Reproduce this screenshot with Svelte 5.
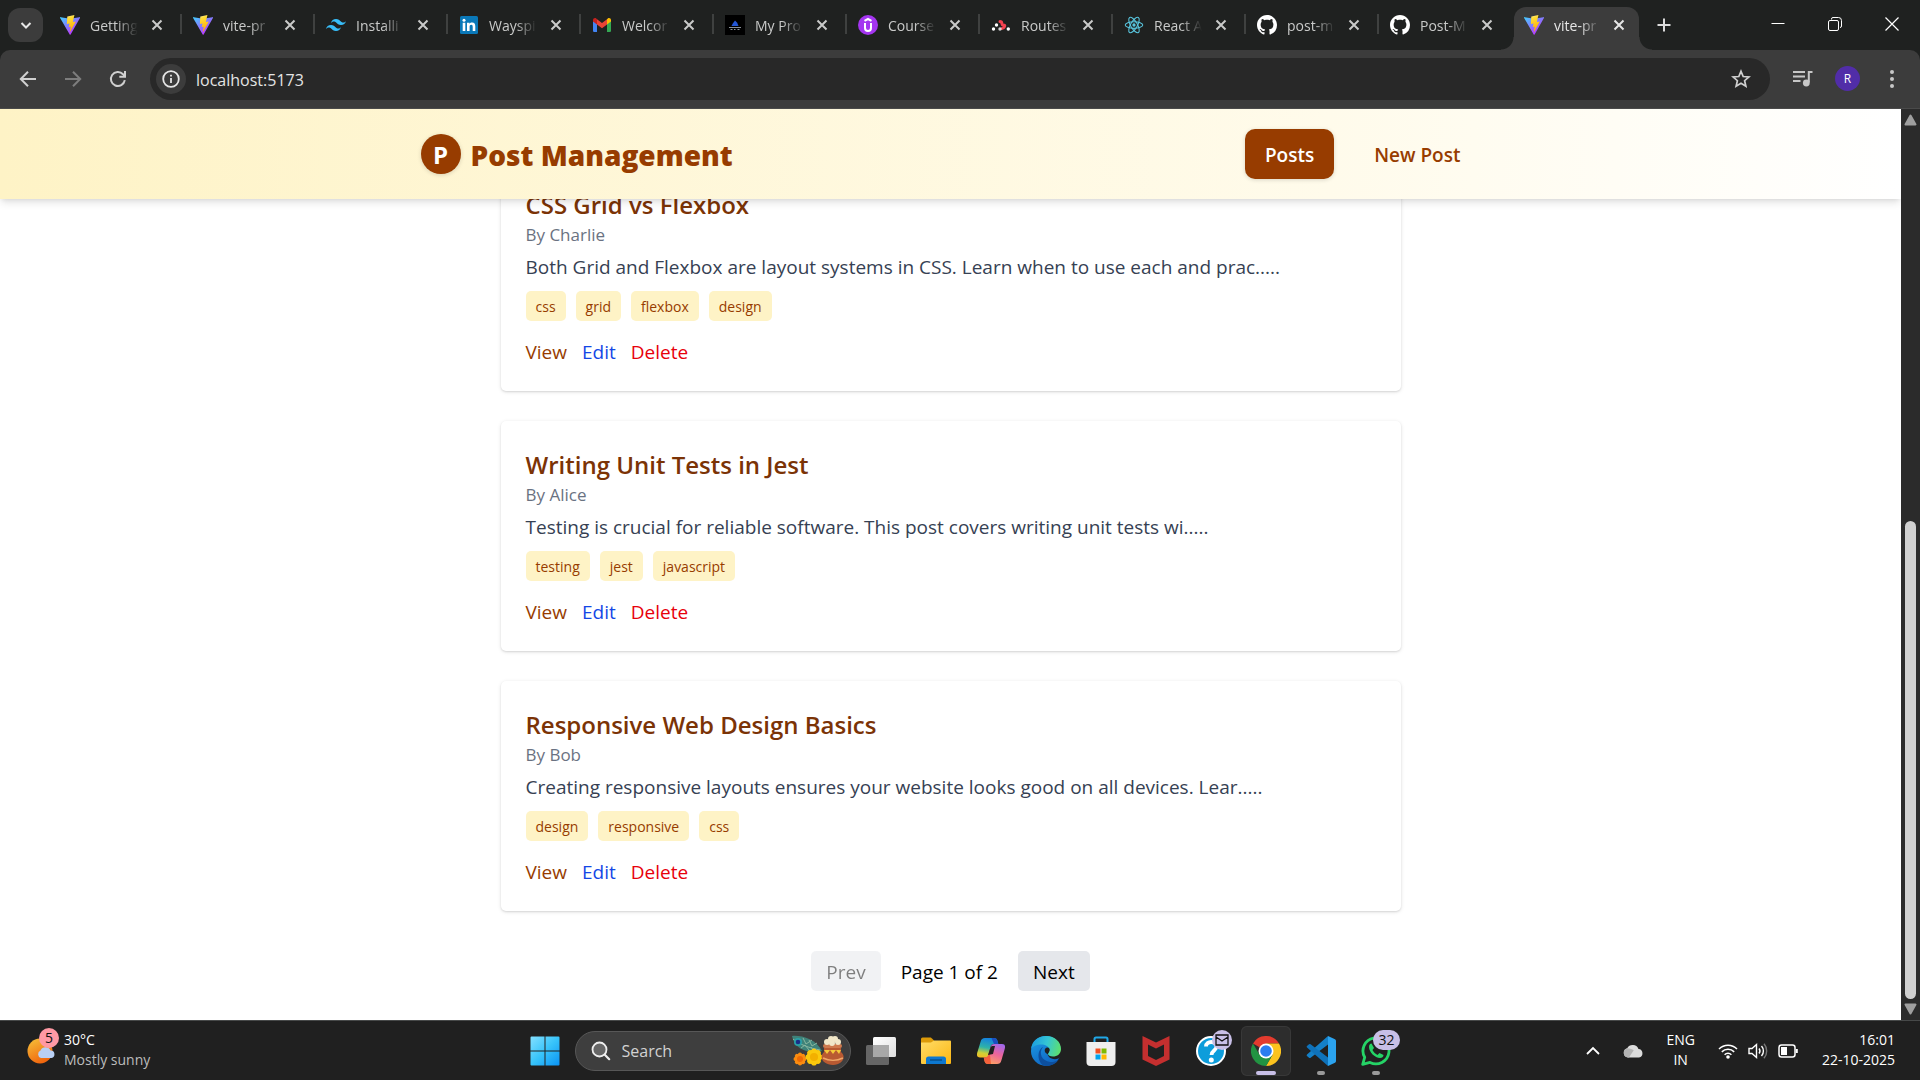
<script>
  const tabs = [
    { icon: 'vite', title: 'Getting' },
    { icon: 'vite', title: 'vite-pr' },
    { icon: 'tailwind', title: 'Installi' },
    { icon: 'linkedin', title: 'Wayspi' },
    { icon: 'gmail', title: 'Welcor' },
    { icon: 'project', title: 'My Pro' },
    { icon: 'udemy', title: 'Course' },
    { icon: 'router', title: 'Routes' },
    { icon: 'react', title: 'React A' },
    { icon: 'github', title: 'post-m' },
    { icon: 'github', title: 'Post-M' },
    { icon: 'vite', title: 'vite-pr', active: true }
  ];

  const posts = [
    {
      title: 'CSS Grid vs Flexbox',
      author: 'Charlie',
      excerpt: 'Both Grid and Flexbox are layout systems in CSS. Learn when to use each and prac.....',
      tags: ['css', 'grid', 'flexbox', 'design']
    },
    {
      title: 'Writing Unit Tests in Jest',
      author: 'Alice',
      excerpt: 'Testing is crucial for reliable software. This post covers writing unit tests wi.....',
      tags: ['testing', 'jest', 'javascript']
    },
    {
      title: 'Responsive Web Design Basics',
      author: 'Bob',
      excerpt: 'Creating responsive layouts ensures your website looks good on all devices. Lear.....',
      tags: ['design', 'responsive', 'css']
    }
  ];

  const petals = [0, 45, 90, 135, 180, 225, 270, 315];
</script>

{#snippet closeIcon()}
  <svg class="close-icon" viewBox="0 0 12 12" aria-hidden="true"><path d="M1.5 1.5l9 9M10.500 1.500l-9 9" /></svg>
{/snippet}

{#snippet favicon(name)}
  {#if name === 'vite'}
    <svg class="favicon" viewBox="0 0 32 32" aria-hidden="true">
      <defs>
        <linearGradient id="vite-a" x1="0" y1="0" x2="0.7" y2="0.9"><stop offset="0" stop-color="#41d1ff" /><stop offset="1" stop-color="#bd34fe" /></linearGradient>
        <linearGradient id="vite-b" x1="0.4" y1="0" x2="0.6" y2="1"><stop offset="0" stop-color="#ffea83" /><stop offset="0.15" stop-color="#ffdd35" /><stop offset="1" stop-color="#ffa800" /></linearGradient>
      </defs>
      <path fill="url(#vite-a)" d="M31.900 4.700 17 31.300a.85.85 0 0 1-1.500 0L.2 4.700a.85.85 0 0 1 .9-1.300l15 2.700 14.900-2.700a.85.85 0 0 1 .9 1.300z" />
      <path fill="url(#vite-b)" d="M23 .1 12 2.200a.4.400 0 0 0-.33.380L11 14a.42.420 0 0 0 .5.430l3.100-.7a.42.420 0 0 1 .5.500l-.9 4.500a.42.420 0 0 0 .53.480l1.900-.57a.42.420 0 0 1 .53.490l-1.450 7c-.1.440.490.680.73.310L24.900 11a.42.420 0 0 0-.45-.6l-3.200.62a.42.420 0 0 1-.48-.53L22.900 .6A.42.420 0 0 0 23 .1z" />
    </svg>
  {:else if name === 'tailwind'}
    <svg class="favicon" viewBox="0 0 24 24" aria-hidden="true">
      <path fill="#38bdf8" d="M12 4.800c-3.200 0-5.200 1.600-6 4.800 1.200-1.600 2.600-2.200 4.200-1.800.91.230 1.570.890 2.290 1.620C13.670 10.600 15.030 12 18 12c3.200 0 5.200-1.600 6-4.800-1.200 1.600-2.600 2.200-4.200 1.800-.91-.23-1.570-.89-2.290-1.620C16.330 6.200 14.970 4.800 12 4.800zM6 12c-3.200 0-5.200 1.600-6 4.800 1.200-1.600 2.600-2.200 4.200-1.800.91.230 1.570.890 2.290 1.620 1.180 1.180 2.540 2.580 5.510 2.580 3.200 0 5.200-1.600 6-4.800-1.200 1.600-2.600 2.200-4.200 1.800-.91-.23-1.570-.89-2.290-1.620C10.330 13.400 8.970 12 6 12z" />
    </svg>
  {:else if name === 'linkedin'}
    <svg class="favicon" viewBox="0 0 20 20" aria-hidden="true">
      <rect x="1" y="1" width="18" height="18" rx="1.500" fill="#0a78b8" />
      <circle cx="5" cy="5.200" r="1.500" fill="#fff" />
      <path fill="#fff" d="M3.700 7.800h2.600V16H3.700zM8 7.800h2.500v1.100c.5-.8 1.400-1.300 2.600-1.300 2.400 0 3.200 1.500 3.200 3.900V16h-2.600v-4.100c0-1.300-.3-2.100-1.400-2.100-1.200 0-1.700.8-1.700 2.100V16H8z" />
    </svg>
  {:else if name === 'gmail'}
    <svg class="favicon" viewBox="0 0 20 20" aria-hidden="true">
      <path fill="#4285f4" d="M1 5.500v10.200c0 .7.600 1.300 1.300 1.300H5V9z" />
      <path fill="#34a853" d="M15 17h2.700c.7 0 1.300-.6 1.300-1.300V5.500L15 9z" />
      <path fill="#fbbc04" d="M15 4.200V9.500l4-3V5c0-1.700-1.900-2.600-3.200-1.600z" />
      <path fill="#ea4335" d="M5 9.500V4.200L10 8l5-3.800v5.300L10 13.300z" />
      <path fill="#c5221f" d="M1 5v1.500l4 3V4.200l-.8-.8C2.900 2.400 1 3.300 1 5z" />
    </svg>
  {:else if name === 'project'}
    <svg class="favicon" viewBox="0 0 20 20" aria-hidden="true">
      <rect width="20" height="20" fill="#000" />
      <path fill="#2457d6" d="M10 5.500l2.200 2.300 1.300 3.200H6.500l1.300-2.600z" />
      <path stroke="#8d949c" stroke-width="1.200" d="M4 12.500h12M5.500 14.500h2M9 14.500h1.500M12.500 14.500h2" />
    </svg>
  {:else if name === 'udemy'}
    <svg class="favicon" viewBox="0 0 20 20" aria-hidden="true">
      <circle cx="10" cy="10" r="10" fill="#a435f0" />
      <path fill="none" stroke="#fff" stroke-width="2" d="M6.500 5.900 10 4l3.500 1.900M7 8v5a3 3 0 0 0 6 0V8" />
    </svg>
  {:else if name === 'router'}
    <svg class="favicon" viewBox="0 0 20 20" aria-hidden="true">
      <path fill="none" stroke="#f44250" stroke-width="3" stroke-linecap="round" stroke-linejoin="round" d="M9 6.500c3 0 1 3.500 3 3.500s2 .5 1.500 1.500-1.500 2-2.500 2" />
      <circle cx="5.500" cy="10" r="1.700" fill="#fff" /><circle cx="2.500" cy="14" r="1.700" fill="#fff" />
      <circle cx="9" cy="14" r="1.700" fill="#fff" opacity=".8" /><circle cx="17.300" cy="14" r="1.700" fill="#fff" />
    </svg>
  {:else if name === 'react'}
    <svg class="favicon" viewBox="-12 -12 24 24" aria-hidden="true">
      <g fill="none" stroke="#58c4dc" stroke-width="1.300"><ellipse rx="10.500" ry="4" /><ellipse rx="10.500" ry="4" transform="rotate(60)" /><ellipse rx="10.500" ry="4" transform="rotate(120)" /></g>
      <circle r="2" fill="#58c4dc" />
    </svg>
  {:else}
    <svg class="favicon" viewBox="0 0 16 16" aria-hidden="true">
      <path fill="#fff" d="M8 0C3.580 0 0 3.580 0 8c0 3.540 2.290 6.530 5.470 7.590.4.070.55-.17.55-.38 0-.19-.01-.82-.01-1.490-2.010.370-2.530-.49-2.690-.94-.09-.23-.48-.94-.82-1.130-.28-.15-.68-.52-.01-.53.630-.01 1.080.580 1.230.820.720 1.210 1.870.870 2.330.660.070-.52.280-.87.510-1.070-1.780-.2-3.640-.89-3.640-3.950 0-.87.310-1.590.82-2.150-.08-.2-.36-1.020.08-2.120 0 0 .67-.21 2.200.82.640-.18 1.320-.27 2-.27s1.360.090 2 .27c1.530-1.040 2.200-.82 2.200-.82.440 1.100.160 1.920.08 2.120.510.560.82 1.270.82 2.150 0 3.070-1.870 3.750-3.650 3.950.290.250.540.730.540 1.480 0 1.070-.01 1.930-.01 2.200 0 .21.150.460.550.380A8.010 8.010 0 0 0 16 8c0-4.420-3.580-8-8-8z" />
    </svg>
  {/if}
{/snippet}

<div class="desktop">
  <div class="tab-strip">
    <button class="tab-search" aria-label="Search tabs">
      <svg width="14" height="14" viewBox="0 0 14 14"><path d="M2.500 5L7 9.500 11.500 5" fill="none" stroke="#e8e8e8" stroke-width="2" /></svg>
    </button>
    <div class="tabs">
      {#each tabs as tab}
        <div class="tab" class:active={tab.active}>
          {@render favicon(tab.icon)}
          <span class="tab-title">{tab.title}</span>
          <button class="tab-close" aria-label="Close tab">{@render closeIcon()}</button>
        </div>
      {/each}
    </div>
    <button class="new-tab" aria-label="New tab">
      <svg width="14" height="14" viewBox="0 0 14 14"><path d="M7 0.500v13M.5 7h13" stroke="#dcdcdc" stroke-width="2" /></svg>
    </button>
    <div class="window-controls">
      <button aria-label="Minimize"><svg width="14" height="14" viewBox="0 0 14 14"><path d="M.5 6.500h13" stroke="#fff" /></svg></button>
      <button aria-label="Restore"><svg width="14" height="14" viewBox="0 0 14 14"><path d="M3.500 2.500V2a1.500 1.500 0 0 1 1.500-1.500h5.500a3 3 0 0 1 3 3V9a1.500 1.500 0 0 1-1.500 1.500M2 3.500h7a1.500 1.500 0 0 1 1.500 1.500v7a1.500 1.500 0 0 1-1.500 1.500H2A1.500 1.500 0 0 1 .5 12V5A1.500 1.500 0 0 1 2 3.500z" fill="none" stroke="#fff" /></svg></button>
      <button aria-label="Close window"><svg width="14" height="14" viewBox="0 0 14 14"><path d="M.5 .5l13 13M13.500 .5l-13 13" stroke="#fff" stroke-width="1.200" /></svg></button>
    </div>
  </div>

  <div class="toolbar">
    <button class="tool" aria-label="Back"><svg width="20" height="20" viewBox="0 0 20 20"><path d="M18 10H3M10 2.800 2.800 10l7.200 7.200" fill="none" stroke="#d0d0d0" stroke-width="2" /></svg></button>
    <button class="tool" aria-label="Forward"><svg width="20" height="20" viewBox="0 0 20 20"><path d="M2 10h15M10 2.800 17.200 10 10 17.200" fill="none" stroke="#7d7d7d" stroke-width="2" /></svg></button>
    <button class="tool" aria-label="Reload"><svg width="20" height="20" viewBox="0 0 20 20"><path d="M16.800 11.200A7 7 0 1 1 15 5.200L16.600 7M17 2v5.700h-5.700" fill="none" stroke="#d0d0d0" stroke-width="2" /></svg></button>
    <div class="omnibox">
      <button class="site-info" aria-label="Site information">
        <svg width="18" height="18" viewBox="0 0 18 18"><circle cx="9" cy="9" r="7.800" fill="none" stroke="#e6e6e6" stroke-width="1.800" /><path d="M9 8v5M9 4.800v1.800" stroke="#e6e6e6" stroke-width="1.800" /></svg>
      </button>
      <input class="url" type="text" value="localhost:5173" aria-label="Address bar" />
      <button class="bookmark" aria-label="Bookmark this tab">
        <svg width="20" height="20" viewBox="0 0 20 20"><path d="M10 2.300l2.200 5.200 5.700.5-4.300 3.700 1.300 5.500L10 14.300l-4.900 2.900 1.300-5.500L2.100 8l5.700-.5z" fill="none" stroke="#d0d0d0" stroke-width="1.700" /></svg>
      </button>
    </div>
    <button class="tool media" aria-label="Media controls">
      <svg width="20" height="18" viewBox="0 0 20 18"><path d="M0 2h12M0 6.500h12M0 11h7.500" stroke="#c7c7c7" stroke-width="2" /><path d="M15 2h4.500M15.800 1v11.500" stroke="#c7c7c7" stroke-width="2" /><circle cx="13.300" cy="13" r="3.400" fill="#c7c7c7" /></svg>
    </button>
    <button class="avatar" aria-label="Profile R">R</button>
    <button class="tool menu" aria-label="Chrome menu"><svg width="6" height="20" viewBox="0 0 6 20"><g fill="#c7c7c7"><circle cx="3" cy="3" r="2" /><circle cx="3" cy="10" r="2" /><circle cx="3" cy="17" r="2" /></g></svg></button>
  </div>

  <div class="viewport">
    <div class="page">
      <header>
        <div class="header-inner">
          <a class="brand" href="/"><span class="brand-mark">P</span><span class="brand-name">Post Management</span></a>
          <nav>
            <a class="nav-link current" href="/">Posts</a>
            <a class="nav-link" href="/new">New Post</a>
          </nav>
        </div>
      </header>
      <main>
        <div class="posts">
          {#each posts as post}
            <article>
              <h2>{post.title}</h2>
              <p class="author">By {post.author}</p>
              <p class="excerpt">{post.excerpt}</p>
              <div class="tags">
                {#each post.tags as tag}<span class="tag">{tag}</span>{/each}
              </div>
              <div class="actions">
                <a class="view" href="/posts">View</a>
                <a class="edit" href="/edit">Edit</a>
                <button class="delete">Delete</button>
              </div>
            </article>
          {/each}
        </div>
        <div class="pagination">
          <button disabled>Prev</button>
          <span>Page 1 of 2</span>
          <button>Next</button>
        </div>
      </main>
    </div>
    <div class="scrollbar">
      <svg width="13" height="12" viewBox="0 0 13 12"><path d="M6.500 1.500l5 9h-10z" fill="#9f9f9f" stroke="#9f9f9f" stroke-linejoin="round" stroke-width="2" /></svg>
      <div class="track"><div class="thumb"></div></div>
      <svg width="13" height="12" viewBox="0 0 13 12"><path d="M6.500 10.500l5-9h-10z" fill="#9f9f9f" stroke="#9f9f9f" stroke-linejoin="round" stroke-width="2" /></svg>
    </div>
  </div>

  <footer class="taskbar">
    <button class="weather">
      <span class="weather-icon">
        <svg width="30" height="30" viewBox="0 0 30 30" aria-hidden="true">
          <defs><linearGradient id="sun" x1="0" y1="0" x2="0.5" y2="1"><stop offset="0" stop-color="#f6c33a" /><stop offset="1" stop-color="#f0660e" /></linearGradient></defs>
          <circle cx="13" cy="15" r="12.500" fill="url(#sun)" />
          <path d="M14 22a4 4 0 0 1-.5-7.500A5.500 5.500 0 0 1 23.500 14.500 3.800 3.800 0 0 1 24.500 22z" fill="#b9d0f5" />
        </svg>
        <span class="badge pink">5</span>
      </span>
      <span class="two-line"><span>30°C</span><span class="dim">Mostly sunny</span></span>
    </button>

    <div class="apps">
      <button class="app" aria-label="Start">
        <svg width="30" height="30" viewBox="0 0 30 30"><defs><linearGradient id="win" x1="0" y1="0" x2="1" y2="1"><stop offset="0" stop-color="#84e0ff" /><stop offset="0.5" stop-color="#38c4fa" /><stop offset="1" stop-color="#0a93f5" /></linearGradient></defs><path fill="url(#win)" d="M1.500.5H14.500V14.500H.5V1.500a1 1 0 0 1 1-1zM15.500.5h13a1 1 0 0 1 1 1v13h-14zM.5 15.500h14v14h-13a1 1 0 0 1-1-1zM15.500 15.500h14v13a1 1 0 0 1-1 1h-13z" /></svg>
      </button>
      <label class="search">
        <svg width="20" height="20" viewBox="0 0 20 20" aria-hidden="true"><circle cx="8.500" cy="8.500" r="7" fill="#666" stroke="#eee" stroke-width="1.800" /><path d="M13.800 13.800l4.400 4.400" stroke="#eee" stroke-width="2.200" stroke-linecap="round" /></svg>
        <input type="text" placeholder="Search" aria-label="Search" />
        <svg class="festive" width="53" height="31" viewBox="0 0 53 31" aria-hidden="true">
          <path d="M1 1c9-1 24 3 30 15C18 19 4 15 1 1z" fill="#3f8279" />
          <path d="M2 4c7 6 17 9 27 11M12 3l3 6 6-4M18 5l3 6 5-3M10 13l4-3 4 5M20 12l2 3" fill="none" stroke="#88b7a0" />
          <circle cx="7" cy="7" r="4" fill="#2aa0a6" /><circle cx="7" cy="7" r="2.300" fill="#192f88" />
          <g fill="#fb8c10"><circle cx="9" cy="24" r="5.500" />{#each petals as a}<circle cx="9" cy="19.500" r="2" transform="rotate({a} 9 24)" />{/each}</g><circle cx="9" cy="24" r="3" fill="#ee6a05" />
          <g fill="#fbc90d"><circle cx="23" cy="22" r="7.500" />{#each petals as a}<circle cx="23" cy="16" r="2.600" transform="rotate({a} 23 22)" />{/each}</g><circle cx="23" cy="22" r="4" fill="#f3b000" />
          <path d="M33 13h17v4c6 5 1 13-8 13s-15-7-9-13z" fill="#b95a32" />
          <rect x="32" y="9" width="19" height="4" rx="2" fill="#cf7a4e" />
          <path d="M33 15l3 4 3-4 3 4 3-4 3 4 2-4z" fill="#f5c83a" /><path d="M32 23c6 3 14 3 20 0" fill="none" stroke="#f0a768" stroke-width="1.500" />
          <g fill="#f2e7c9"><circle cx="36" cy="7" r="3" /><circle cx="40" cy="4" r="3" /><circle cx="44" cy="4" r="3" /><circle cx="47" cy="7" r="3" /><circle cx="41" cy="8" r="3" /></g>
        </svg>
      </label>
      <button class="app" aria-label="Task view">
        <svg width="30" height="28" viewBox="0 0 30 28"><defs><linearGradient id="tv" x1="0" y1="0" x2="1" y2="1"><stop offset="0" stop-color="#fff" /><stop offset="1" stop-color="#dedede" /></linearGradient></defs><rect y="8" width="23" height="20" rx="1.500" fill="#666" /><rect x="7" width="23" height="20" rx="1.500" fill="url(#tv)" /><path d="M7 8h16v12H8a1 1 0 0 1-1-1z" fill="#a8a8a8" /></svg>
      </button>
      <button class="app" aria-label="File Explorer">
        <svg width="30" height="27" viewBox="0 0 30 27"><defs><linearGradient id="fold" x1="0" y1="0" x2="1" y2="1"><stop offset="0" stop-color="#ffdc68" /><stop offset="1" stop-color="#fbb713" /></linearGradient></defs><path d="M0 6V2a1.500 1.500 0 0 1 1.500-1.500H9c1 0 1.500.5 2 1L13 3.500V8H0z" fill="#dc9a09" /><path d="M0 5.500h10l3-2h16a1 1 0 0 1 1 1V26a1 1 0 0 1-1 1H1a1 1 0 0 1-1-1z" fill="url(#fold)" /><path d="M5 27v-5a2.500 2.500 0 0 1 2.500-2.500h15A2.500 2.500 0 0 1 25 22v5z" fill="#0d78d0" /><path d="M9 23h12" stroke="#07508e" stroke-width="1.500" /></svg>
      </button>
      <button class="app" aria-label="Copilot">
        <svg width="28" height="26" viewBox="0 0 28 26"><defs>
          <linearGradient id="cpa" x1="0.3" y1="0" x2="0.1" y2="1"><stop offset="0" stop-color="#1684dc" /><stop offset="0.45" stop-color="#2fb3a8" /><stop offset="0.75" stop-color="#d0d136" /><stop offset="1" stop-color="#f7b822" /></linearGradient>
          <linearGradient id="cpb" x1="0.8" y1="0" x2="0.4" y2="1"><stop offset="0" stop-color="#9f68ee" /><stop offset="0.5" stop-color="#ec649b" /><stop offset="1" stop-color="#fb9f67" /></linearGradient></defs>
          <path d="M8 0h9c2 0 3 1 3.500 3l.8 3H17c-2 0-3 1-3.500 3l-2.900 10.500H3c-3 0-3.500-2-2.700-5L3.500 4C4.300 1 5.500 0 8 0z" fill="url(#cpa)" />
          <path d="M14.500 0H17c2 0 3 1 3.500 3l.8 3H17z" fill="#1a4fc0" />
          <path d="M20 26h-9c-2 0-3-1-3.500-3l-.8-3.500H8c2 0 3-1 3.500-3l2-7c.7-2.500 1.500-3.500 4-3.500H25c3 0 3.500 2 2.700 5L24.500 22c-.8 3-2 4-4.500 4z" fill="url(#cpb)" />
          <path d="M6.700 19.500H8c2 0 3-1 3.500-3l1-3.500 1.500 13h-3c-2 0-3-1-3.500-3z" fill="#f4522f" opacity=".8" />
          <path d="M13 11l-2 6 5-1 2-8h-2.500c-1.300 0-2 1-2.500 3z" fill="#202020" /></svg>
      </button>
      <button class="app" aria-label="Edge">
        <svg width="30" height="30" viewBox="0 0 30 30"><defs>
          <linearGradient id="eda" x1="0" y1="0.4" x2="1" y2="0.6"><stop offset="0" stop-color="#1b9de0" /><stop offset="0.5" stop-color="#35c6d4" /><stop offset="1" stop-color="#5ee06c" /></linearGradient>
          <linearGradient id="edb" x1="0" y1="0" x2="0.5" y2="1"><stop offset="0" stop-color="#1ea1e6" /><stop offset="1" stop-color="#0f66c4" /></linearGradient></defs>
          <circle cx="15" cy="15" r="15" fill="url(#edb)" />
          <path d="M12 11c-5 6-1 14 7 15 3 .3 6-.7 8.500-2-3 4-7.500 6-12.500 6C7 29.500 4.500 15 12 11z" fill="#0d4f9e" />
          <path d="M20 9l10 5v5.500l-1.500 2.500c-4 2.500-12 1-12-5z" fill="#202020" />
          <path d="M0 13C1 5 7 0 15 0c9 0 15 6 15 13 0 5-4 7.500-8 7.500-3 0-5-1-5-2.500s1.500-2 1.500-4c0-3-3.500-5.500-8-5.500C5.500 8.500 1.500 10.500 0 13z" fill="url(#eda)" />
          <path d="M14 13c2-2.500 5-1.500 4.500 1 0 2-1.500 2.500-1.500 4-2 0-4-2.500-3-5z" fill="#202020" />
        </svg>
      </button>
      <button class="app" aria-label="Microsoft Store">
        <svg width="30" height="30" viewBox="0 0 30 30"><path d="M8.500 8V3a1.500 1.500 0 0 1 1.500-1.500h10A1.500 1.500 0 0 1 21.500 3v5" fill="none" stroke="#20a8e8" stroke-width="2" /><path d="M.5 6h29v20a4 4 0 0 1-4 4h-21a4 4 0 0 1-4-4z" fill="#efefef" /><path fill="#f25022" d="M9.500 12.500h5v5h-5z" /><path fill="#7fba00" d="M15.500 12.500h5v5h-5z" /><path fill="#00a4ef" d="M9.500 18.500h5v5h-5z" /><path fill="#ffb900" d="M15.500 18.500h5v5h-5z" /></svg>
      </button>
      <button class="app" aria-label="McAfee">
        <svg width="28" height="30" viewBox="0 0 28 30"><path fill="#c52f2f" fill-rule="evenodd" d="M.5 0 14 6.500 27.500 0v23.500L14 30 .5 23.500zM6 8.500V20l8 4 8-4V8.500l-8 4z" /></svg>
      </button>
      <button class="app" aria-label="Help">
        <svg width="30" height="30" viewBox="0 0 30 30"><circle cx="15" cy="15" r="14" fill="#0d9ddb" stroke="#fff" stroke-width="2" /><path d="M10 10.500C10 4.500 20.500 4.500 20.500 10.500c0 4-5 4-5 8.500" fill="none" stroke="#fff" stroke-width="3.800" /><circle cx="15.300" cy="24" r="2.500" fill="#fff" /></svg>
        <span class="badge lilac mail"><svg width="14" height="12" viewBox="0 0 14 12"><path d="M1 1h12v10H1zM1 3l6 4 6-4" fill="none" stroke="#111" stroke-width="1.300" /></svg></span>
      </button>
      <button class="app selected" aria-label="Chrome">
        <svg width="30" height="30" viewBox="0 0 30 30"><path d="M15 15 2 7.500A15 15 0 0 1 28 7.500H15z" fill="#e33b2e" /><path d="M15 7.500h13A15 15 0 0 1 15 30l6.500-11.200z" fill="#fcc31e" /><path d="M2 7.500A15 15 0 0 0 15 30l6.500-11.200H8.500z" fill="#229342" /><circle cx="15" cy="15" r="7.500" fill="#fff" /><circle cx="15" cy="15" r="5.800" fill="#2b7df0" /></svg>
        <span class="running on"></span>
      </button>
      <button class="app" aria-label="Visual Studio Code">
        <svg width="30" height="30" viewBox="0 0 30 30"><path d="M22 0 1 18.500a1 1 0 0 0 0 1.500l2 1.700a1.300 1.300 0 0 0 1.600 0L22 8.500z" fill="#1480c8" /><path d="M22 30 1 11.500A1 1 0 0 1 1 10l2-1.700a1.300 1.300 0 0 1 1.600 0L22 21.500z" fill="#0f72ba" /><path d="M22 0l7 3.300a1.800 1.800 0 0 1 1 1.600v20.200a1.800 1.800 0 0 1-1 1.600L22 30z" fill="#2ba3ef" /></svg>
        <span class="running"></span>
      </button>
      <button class="app" aria-label="WhatsApp">
        <svg width="30" height="30" viewBox="0 0 30 30"><path d="M1.700 28.300l2-7A13 13 0 1 1 9 26.400z" fill="#202020" stroke="#25d366" stroke-width="2.800" stroke-linejoin="round" /><path d="M10.500 7.500c-1.500 0-2.500 1.500-2.500 3.500 0 5 6 11 11 11 2 0 3.500-1.300 3.500-3l-4-2-2 2c-2-1-4-3-5-5l1.500-2z" fill="#25d366" /></svg>
        <span class="badge lilac count">32</span>
        <span class="running"></span>
      </button>
    </div>

    <div class="tray">
      <button class="chevron" aria-label="Show hidden icons"><svg width="14" height="9" viewBox="0 0 14 9"><path d="M1 8l6-6 6 6" fill="none" stroke="#fff" stroke-width="1.800" /></svg></button>
      <button class="cloud" aria-label="OneDrive"><svg width="20" height="14" viewBox="0 0 20 14"><path d="M5 13.500a4.700 4.700 0 0 1-.8-9.200A6.300 6.300 0 0 1 15.500 5 4.300 4.300 0 0 1 16 13.500z" fill="#dcdcdc" /><path d="M4.200 4.300c3 .2 5 1 6.500 2L6 13.500H5a4.700 4.700 0 0 1-.8-9.200z" fill="#b4b4b4" /></svg></button>
      <button class="language two-line"><span>ENG</span><span>IN</span></button>
      <button class="status" aria-label="Network, volume and battery">
        <svg width="20" height="16" viewBox="0 0 20 16"><g fill="none" stroke="#fff" stroke-width="1.500"><path d="M1 6a12.700 12.700 0 0 1 18 0M3.800 8.900a8.800 8.800 0 0 1 12.400 0M6.600 11.700a4.800 4.800 0 0 1 6.800 0" /></g><circle cx="10" cy="14" r="1.800" fill="#fff" /></svg>
        <svg width="20" height="18" viewBox="0 0 20 18"><g fill="none" stroke="#fff" stroke-width="1.400"><path d="M1 6.500h3L8.500 2.500v13L4 11.500H1z" /><path d="M11 6.500a4 4 0 0 1 0 5M13.500 4a7.500 7.500 0 0 1 0 10" /><path d="M16 1.800a11 11 0 0 1 0 14.400" stroke="#777" /></g></svg>
        <svg width="20" height="14" viewBox="0 0 20 14"><rect x="1" y="1" width="16" height="12" rx="2.500" fill="none" stroke="#fff" stroke-width="1.500" /><rect x="3" y="3" width="6" height="8" fill="#fff" /><path d="M18.800 5v4" stroke="#fff" stroke-width="2" /></svg>
      </button>
      <button class="clock two-line"><span>16:01</span><span>22-10-2025</span></button>
    </div>
  </footer>
</div>

<style>
  :global(body) { margin: 0; }
  .desktop {
    display: flex;
    flex-direction: column;
    height: 100vh;
    overflow: hidden;
    font-family: 'Open Sans', 'Noto Sans', sans-serif;
    background: #1f2120;
  }
  .desktop * { box-sizing: border-box; }
  button { font: inherit; color: inherit; background: none; border: 0; padding: 0; }
  input { font: inherit; color: inherit; background: none; border: 0; padding: 0; outline: 0; min-width: 0; }
  a { text-decoration: none; color: inherit; }
  h2, p { margin: 0; }
  svg { display: block; flex: none; }

  /* Browser tabs */
  .tab-strip { display: flex; align-items: center; height: 50px; flex: none; padding-left: 8px; color: #c9cac9; }
  .tab-search { display: grid; place-items: center; width: 35px; height: 34px; border-radius: 12px; background: #3c3c3c; }
  .tabs { display: flex; align-self: stretch; padding: 7px 0 0 5px; }
  .tab { position: relative; display: flex; align-items: center; width: 133px; padding: 0 14px 8px 12px; font-size: 14px; }
  .tab:not(.active):not(:nth-last-child(2))::after { content: ''; position: absolute; right: -1px; top: 7px; width: 2px; height: 20px; background: #3f4140; }
  .tab.active { width: 125px; margin-left: 3px; padding-left: 10px; padding-right: 10px; border-radius: 12px 12px 0 0; background: #3c3c3c; color: #e6e6e6; }
  .tab.active::before, .tab.active::after { content: ''; position: absolute; bottom: 0; width: 13px; height: 13px; }
  .tab.active::before { right: 100%; background: radial-gradient(circle at 0 0, transparent 12px, #3c3c3c 13px); }
  .tab.active::after { left: 100%; background: radial-gradient(circle at 100% 0, transparent 12px, #3c3c3c 13px); }
  .favicon { width: 20px; height: 20px; }
  .tab-title { flex: 1; min-width: 0; margin-left: 10px; padding-top: 2px; white-space: nowrap; mask-image: linear-gradient(to right, #000 55%, transparent 98%); }
  .tab-close { display: grid; place-items: center; width: 20px; height: 20px; margin-left: 8px; }
  .close-icon { width: 12px; height: 12px; stroke: currentColor; stroke-width: 2; }
  .new-tab { display: grid; place-items: center; width: 30px; height: 30px; margin-left: 10px; }
  .window-controls { display: flex; align-self: stretch; margin-left: auto; }
  .window-controls button { display: grid; place-items: center; width: 57px; padding-bottom: 2px; }

  /* Browser toolbar */
  .toolbar { display: flex; align-items: center; height: 59px; flex: none; padding: 0 16px 1px 8px; border-radius: 10px 10px 0 0; border-bottom: 1px solid #4a4a4a; background: #3c3c3c; }
  .tool { display: grid; place-items: center; width: 40px; height: 40px; margin-right: 5px; }
  .omnibox { display: flex; align-items: center; flex: 1; height: 42px; margin-left: 7px; padding: 0 19px 0 6px; border-radius: 21px; background: #282828; }
  .site-info { display: grid; place-items: center; width: 30px; height: 30px; border-radius: 50%; background: #3c3c3c; }
  .url { flex: 1; margin-left: 10px; padding-top: 2px; font-size: 16px; color: #e4e4e4; }
  .media { margin: 0 12px 0 13px; }
  .avatar { display: grid; place-items: center; width: 25px; height: 25px; border-radius: 50%; background: #512da8; color: #fff; font-size: 12px; }
  .menu { width: 24px; margin: 0 0 0 20px; }

  /* Web page */
  .viewport { display: flex; flex: 1; min-height: 0; }
  .page { display: flex; flex-direction: column; flex: 1; min-width: 0; background: #fff; overflow: hidden; }
  header { position: relative; z-index: 1; flex: none; background: linear-gradient(to right, #fef3c6, #fffbeb 70%, #fff); box-shadow: 0 5px 8px -1px rgb(0 0 0 / 10%), 0 2px 5px -2px rgb(0 0 0 / 10%); }
  .header-inner { display: flex; align-items: center; justify-content: space-between; max-width: 1120px; margin: 0 auto; padding: 20px 30px; color: #973c00; }
  .brand { display: flex; align-items: center; gap: 10px; }
  .brand-mark { display: grid; place-items: center; width: 40px; height: 40px; border-radius: 50%; background: #973c00; color: #fff; font-size: 24px; font-weight: 700; box-shadow: 0 1px 4px rgb(0 0 0 / 15%); }
  .brand-name { padding-top: 2px; font-size: 28px; font-weight: 800; line-height: 40px; }
  nav { display: flex; gap: 20px; }
  .nav-link { padding: 11px 20px 9px; border-radius: 10px; font-size: 19px; font-weight: 600; line-height: 30px; }
  .nav-link.current { background: #973c00; color: #fff; box-shadow: 0 1px 4px rgb(0 0 0 / 15%); }
  main { display: flex; flex-direction: column; justify-content: flex-end; flex: 1; min-height: 0; width: 100%; max-width: 960px; margin: 0 auto; padding: 0 30px 29px; }
  .posts { display: flex; flex-direction: column; gap: 30px; }
  article { padding: 26px 25px 24px; border-radius: 5px; background: #fff; box-shadow: 0 1px 4px rgb(0 0 0 / 10%), 0 1px 2px rgb(0 0 0 / 10%); font-size: 19px; line-height: 30px; }
  h2 { color: #7b3306; font-size: 24px; font-weight: 600; line-height: 35px; }
  .author { color: #6a7282; font-size: 17px; line-height: 25px; }
  .excerpt { margin-top: 5px; color: #364153; }
  .tags { display: flex; gap: 10px; margin-top: 9px; }
  .tag { padding: 6px 10px 4px; border-radius: 5px; background: #fef3c6; color: #973c00; font-size: 14px; line-height: 20px; }
  .actions { display: flex; gap: 15px; margin-top: 16px; }
  .view { color: #973c00; }
  .edit { color: #1447e6; }
  .delete { color: #e7000b; }
  .pagination { display: flex; align-items: center; justify-content: center; gap: 20px; margin-top: 40px; color: #000; font-size: 19px; line-height: 30px; }
  .pagination span { padding-top: 2px; }
  .pagination button { padding: 6px 15px 4px; border-radius: 5px; background: #e5e7eb; }
  .pagination button:disabled { opacity: 0.5; }

  .scrollbar { display: flex; flex-direction: column; align-items: center; width: 19px; padding: 5px 0; background: #2b2b2b; }
  .track { display: flex; flex-direction: column; justify-content: flex-end; flex: 1; width: 11px; padding: 4px 0; }
  .thumb { height: 55%; border-radius: 6px; background: #d0d0d0; }

  /* Taskbar */
  .taskbar { display: grid; grid-template-columns: 1fr auto 1fr; align-items: center; height: 60px; flex: none; border-top: 1px solid #474949; background: #202020; color: #fff; font-size: 14px; }
  .two-line { display: flex; flex-direction: column; padding-bottom: 2px; line-height: 20px; }
  .dim { color: #bcbcbc; }
  .badge { position: absolute; display: grid; place-items: center; min-width: 20px; height: 20px; border-radius: 10px; color: #111; font-size: 14px; line-height: 20px; }
  .badge.pink { top: -8px; right: -2px; background: #ff99a4; }
  .badge.lilac { background: #c8bfe7; }
  .badge.mail { top: 4px; right: 4px; }
  .badge.count { top: 4px; right: 1px; padding: 0 5px; }
  .weather { display: flex; align-items: center; justify-self: start; gap: 7px; margin-left: 27px; text-align: left; }
  .weather-icon { position: relative; }
  .apps { display: flex; align-items: center; gap: 5px; }
  .app { position: relative; display: grid; place-items: center; width: 50px; height: 50px; border-radius: 6px; }
  .app.selected { background: #2d2d2d; box-shadow: inset 0 0 0 1px #383838; }
  .running { position: absolute; bottom: 1px; left: 21px; width: 8px; height: 4px; border-radius: 2px; background: #9a9a9a; }
  .running.on { left: 15px; width: 20px; background: #c8bfe7; }
  .search { display: flex; align-items: center; width: 276px; height: 40px; padding: 0 6px 0 15px; border: 1px solid #575757; border-radius: 20px; background: #3e3e3e; font-size: 16px; }
  .search input { flex: 1; margin-left: 11px; }
  .search input::placeholder { color: #d2d2d2; opacity: 1; }
  .tray { display: flex; align-items: center; justify-self: end; margin-right: 25px; }
  .cloud { margin-left: 23px; }
  .language { align-items: center; margin-left: 23px; }
  .status { display: flex; align-items: center; gap: 10px; margin-left: 23px; }
  .clock { align-items: flex-end; margin-left: 24px; }
</style>
